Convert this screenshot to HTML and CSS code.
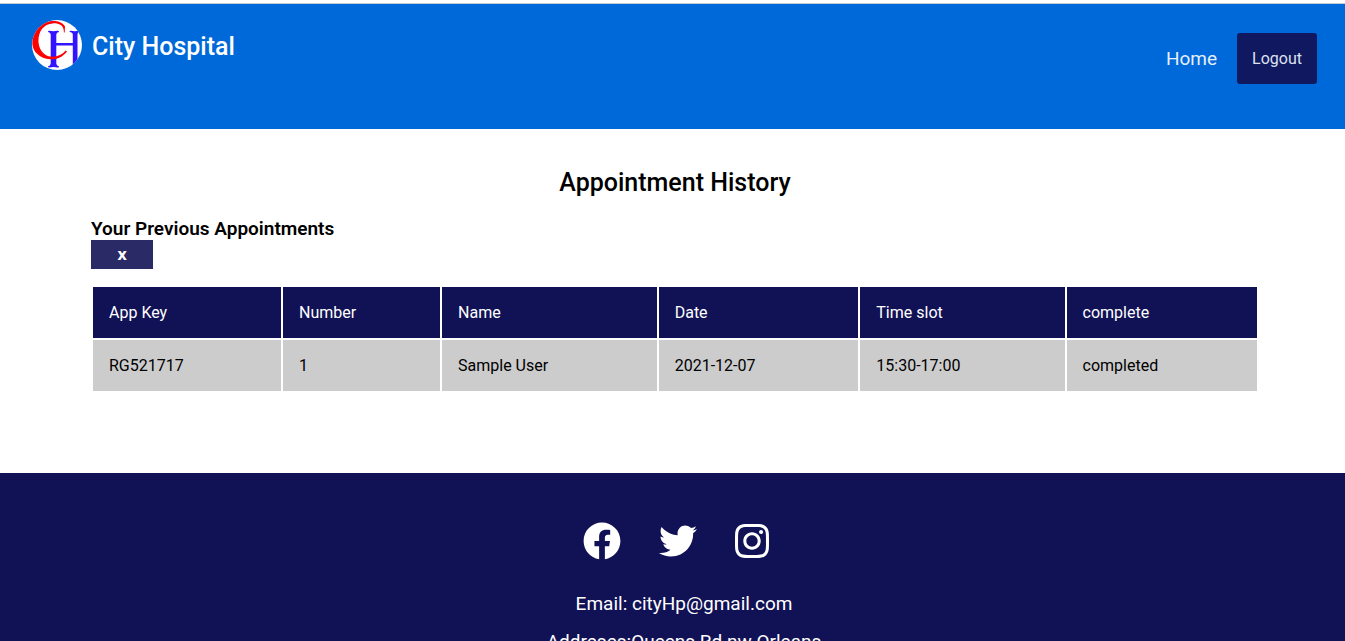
FILE: index.html
```html
<!DOCTYPE html>
<html lang="en">
<head>
<meta charset="utf-8">
<title>City Hospital</title>
<link rel="stylesheet" href="styles.css">
</head>
<body>
<header class="navbar">
  <a class="brand" href="#">
    <svg class="brand-logo" viewBox="0 0 50 50" aria-hidden="true">
      <defs><clipPath id="disc"><circle cx="25" cy="25" r="25"/></clipPath></defs>
      <circle cx="25" cy="25" r="25" fill="#fff"/>
      <g clip-path="url(#disc)">
        <path fill="#3214ff" d="M16 12q0-1.500 1.500-1.200q4 .8 8 0q1.500-.3 1.500 1.200q-2.500.2-2.700 2.500v29q.2 2.500 2.700 2.700q0 1.500-1.500 1.200q-4-.8-8 0q-1.500.3-1.500-1.200q2.500-.2 2.700-2.700v-29q-.2-2.300-2.700-2.500zM24 23h17v2.400h-17zM37.500 12q0-1.500 1.500-1.200q4 .8 7 0l1 1.200q-1.500.3-1.500 2.500v32h-4.700v-32q-.2-2.300-3.300-2.500z"/>
        <path fill="#f00" d="M31.800 12.500C32.500 5 26 3 21 3.400C11 4 6 12 6.500 22C7 30 12 36 19 36.600C25 37 30 35 33.700 30.500L35 31.500C30 37.500 25 39.700 18 39.300C8 38.500 1 32 .3 24C-.5 11 9 1 21 1C27 1 31 3 33 6.500L32.700 12.500z"/>
      </g>
    </svg>
    <span class="brand-name">City Hospital</span>
  </a>
  <nav class="nav-links">
    <a class="nav-link" href="#">Home</a>
    <button class="logout" type="button">Logout</button>
  </nav>
</header>
<main class="content">
  <h1 class="page-title">Appointment History</h1>
  <h2 class="section-title">Your Previous Appointments</h2>
  <button class="close" type="button" aria-label="Close">x</button>
  <table class="appointments">
    <colgroup>
      <col class="col-key"><col class="col-number"><col class="col-name">
      <col class="col-date"><col class="col-slot"><col class="col-status">
    </colgroup>
    <thead>
      <tr><th>App Key</th><th>Number</th><th>Name</th><th>Date</th><th>Time slot</th><th>complete</th></tr>
    </thead>
    <tbody>
      <tr><td>RG521717</td><td>1</td><td>Sample User</td><td>2021-12-07</td><td>15:30-17:00</td><td>completed</td></tr>
    </tbody>
  </table>
</main>
<footer class="footer">
  <div class="social">
    <a href="#" aria-label="Facebook"><svg class="icon" viewBox="0 0 512 512"><path d="M504 256C504 119 393 8 256 8S8 119 8 256c0 123.780 90.690 226.380 209.250 245V327.690h-63V256h63v-54.640c0-62.150 37-96.480 93.670-96.480 27.140 0 55.520 4.840 55.520 4.840v61h-31.280c-30.800 0-40.410 19.120-40.410 38.730V256h68.780l-11 71.690h-57.780V501C413.310 482.380 504 379.780 504 256z"/></svg></a>
    <a href="#" aria-label="Twitter"><svg class="icon" viewBox="0 0 512 512"><path d="M459.370 151.716c.325 4.548.325 9.097.325 13.645 0 138.720-105.583 298.558-298.558 298.558-59.452 0-114.680-17.219-161.137-47.106 8.447.974 16.568 1.299 25.340 1.299 49.055 0 94.213-16.568 130.274-44.832-46.132-.975-84.792-31.188-98.112-72.772 6.498.974 12.995 1.624 19.818 1.624 9.421 0 18.843-1.300 27.614-3.573-48.081-9.747-84.143-51.980-84.143-102.985v-1.299c13.969 7.797 30.214 12.670 47.431 13.319-28.264-18.843-46.781-51.005-46.781-87.391 0-19.492 5.197-37.360 14.294-52.954 51.655 63.675 129.300 105.258 216.365 109.807-1.624-7.797-2.599-15.918-2.599-24.040 0-57.828 46.782-104.934 104.934-104.934 30.213 0 57.502 12.670 76.670 33.137 23.715-4.548 46.456-13.320 66.599-25.340-7.798 24.366-24.366 44.833-46.132 57.827 21.117-2.273 41.584-8.122 60.426-16.243-14.292 20.791-32.161 39.308-52.628 54.253z"/></svg></a>
    <a href="#" aria-label="Instagram"><svg class="icon icon-narrow" viewBox="0 0 448 512"><path d="M224.100 141c-63.600 0-114.900 51.300-114.900 114.900s51.300 114.900 114.900 114.900S339 319.500 339 255.900 287.700 141 224.100 141zm0 189.600c-41.100 0-74.700-33.500-74.700-74.700s33.500-74.700 74.700-74.700 74.700 33.500 74.700 74.700-33.600 74.700-74.700 74.700zm146.400-194.300c0 14.900-12 26.800-26.800 26.800-14.900 0-26.800-12-26.800-26.800s12-26.800 26.800-26.800 26.800 12 26.800 26.800zm76.100 27.200c-1.700-35.900-9.900-67.700-36.200-93.900-26.200-26.200-58-34.400-93.900-36.200-37-2.100-147.900-2.100-184.900 0-35.800 1.700-67.600 9.900-93.900 36.100s-34.400 58-36.200 93.900c-2.100 37-2.100 147.900 0 184.900 1.700 35.900 9.900 67.700 36.200 93.900s58 34.400 93.900 36.200c37 2.100 147.900 2.100 184.900 0 35.900-1.700 67.700-9.900 93.900-36.200 26.200-26.200 34.400-58 36.200-93.900 2.100-37 2.100-147.800 0-184.800zM398.800 388c-7.800 19.600-22.900 34.700-42.600 42.600-29.500 11.700-99.500 9-132.100 9s-102.700 2.600-132.100-9c-19.600-7.800-34.700-22.900-42.600-42.600-11.700-29.500-9-99.500-9-132.100s-2.600-102.700 9-132.100c7.800-19.600 22.900-34.700 42.600-42.600 29.500-11.700 99.500-9 132.100-9s102.700-2.600 132.100 9c19.600 7.800 34.700 22.900 42.600 42.600 11.700 29.500 9 99.500 9 132.100s2.700 102.700-9 132.100z"/></svg></a>
  </div>
  <p class="contact">Email: cityHp@gmail.com</p>
  <p class="contact">Addreses:Queens Rd nw Orleans</p>
</footer>
</body>
</html>
```
FILE: styles.css
```css
* { box-sizing: border-box; }
body {
  margin: 0;
  height: 100vh;
  overflow: hidden;
  background: #fff;
  color: #000;
  font-family: Roboto, "Liberation Sans", sans-serif;
  font-size: 16px;
}
.navbar {
  display: flex;
  justify-content: space-between;
  align-items: flex-start;
  margin-top: 3px;
  padding: 16px 28px 45px 32px;
  border-top: 1px solid #c4ccd4;
  background: #0069d9;
}
.brand {
  display: flex;
  align-items: center;
  gap: 10px;
  color: #fff;
  text-decoration: none;
}
.brand-logo { width: 50px; height: 50px; }
.brand-name {
  padding-top: 4px;
  font-size: 25px;
  font-weight: 500;
  line-height: 28px;
}
.nav-links {
  display: flex;
  align-items: center;
  gap: 20px;
  padding-top: 13px;
}
.nav-link { color: #e6eefb; font-size: 19px; text-decoration: none; }
.logout {
  padding: 15px;
  border: 0;
  border-radius: 3px;
  background: #10185f;
  color: #dde1f0;
  font-family: inherit;
  font-size: 16px;
  line-height: 21px;
}
.content { padding: 40px 86px 80px 91px; }
.page-title {
  margin: 0;
  font-size: 25px;
  font-weight: 500;
  line-height: 28px;
  text-align: center;
}
.section-title {
  margin: 20px 0 0;
  font-size: 19px;
  font-weight: 600;
  line-height: 23px;
}
.close {
  display: block;
  width: 62px;
  height: 29px;
  padding: 0 0 2px;
  border: 0;
  background: #2a2a66;
  color: #fff;
  font-family: "Open Sans", sans-serif;
  font-size: 16px;
  font-weight: 700;
}
.appointments {
  width: 100%;
  margin-top: 16px;
  border-spacing: 2px;
  table-layout: fixed;
}
.appointments th,
.appointments td {
  padding: 16px;
  font-weight: 400;
  line-height: 19px;
  text-align: left;
}
.appointments th { background: #111155; color: #fff; }
.appointments td { background: #ccc; }
.col-key { width: 16.3%; }
.col-number { width: 13.6%; }
.col-name { width: 18.6%; }
.col-date { width: 17.3%; }
.col-slot { width: 17.7%; }
.col-status { width: 16.5%; }
.footer {
  padding: 48px 0 40px;
  background: #111155;
  color: #fff;
  text-align: center;
}
.social {
  display: flex;
  justify-content: center;
  gap: 38px;
  padding-left: 7px;
  margin-bottom: 32px;
}
.social a { display: flex; }
.icon { width: 38px; height: 40px; fill: #fff; }
.icon-narrow { width: 34px; }
.contact {
  margin: 0 0 16px;
  padding-left: 23px;
  font-size: 19px;
  line-height: 22px;
}
```
